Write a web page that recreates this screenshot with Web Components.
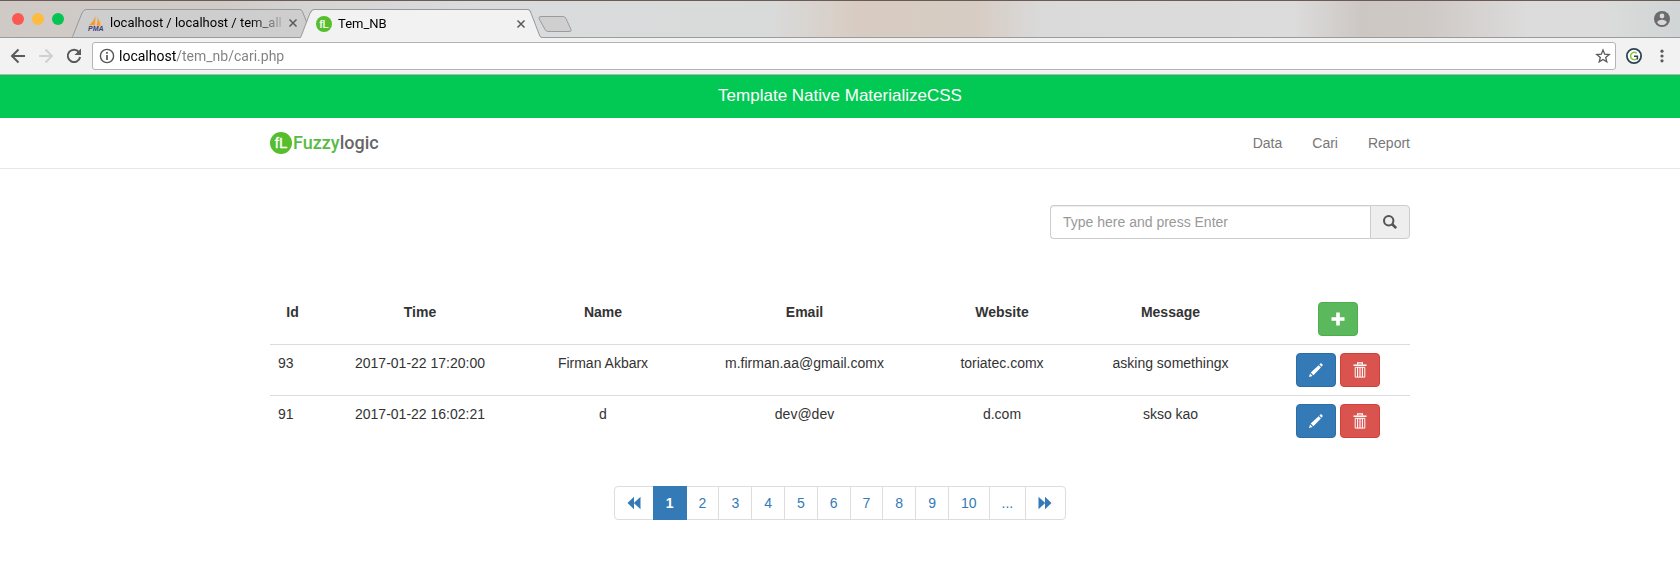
<!DOCTYPE html>
<html lang="en">
<head>
<meta charset="utf-8">
<title>Tem_NB</title>
<style>
  body { margin: 0; background: #fff; color: #333; font: 14px/20px "Liberation Sans", Arial, sans-serif; }
</style>
</head>
<body>
<browser-window>
  <tab-strip slot="tabs">
    <browser-tab><ui-icon slot="icon" name="pma"></ui-icon>localhost / localhost / tem_all /</browser-tab>
    <browser-tab active><ui-icon slot="icon" name="fl"></ui-icon>Tem_NB</browser-tab>
  </tab-strip>
  <browser-toolbar slot="toolbar" url="localhost/tem_nb/cari.php"></browser-toolbar>
  <page-banner>Template Native MaterializeCSS</page-banner>
  <site-nav>
    <nav-link href="#data">Data</nav-link>
    <nav-link href="#cari">Cari</nav-link>
    <nav-link href="#report">Report</nav-link>
  </site-nav>
  <page-container>
    <search-box></search-box>
    <message-table></message-table>
    <page-pagination></page-pagination>
  </page-container>
</browser-window>

<script>
const ICONS = {
  pma: ['0 0 16 16', `<path d="M7.500 1C6 5 4 8 1 10l6 .5zM9 0c1 3 1 7-.500 10.500l5.500.5C13 8 10.500 6 9 0z" fill="#f79a2e"/><path d="M11.500 3c0 3 .5 5 3.500 8h-3z" fill="#fbbf6e"/><text x="0" y="16" font-family="Liberation Sans" font-weight="bold" font-style="italic" font-size="7" fill="#3b3f7c">PMA</text>`],
  fl: ['0 0 22 22', `<circle cx="11" cy="11" r="11" fill="#56bd2d"/><text x="11" y="16" text-anchor="middle" font-family="Liberation Sans" font-size="15" fill="#fff" stroke="#fff" stroke-width=".3">fL</text>`],
  close: ['0 0 10 10', `<path d="M1.500 1.500l7 7m0-7l-7 7" stroke="#5a5a5a" stroke-width="1.500" fill="none"/>`],
  user: ['0 0 16 16', `<circle cx="8" cy="8" r="8" fill="#6b6b6b"/><circle cx="8" cy="5" r="2.400" fill="#d8d8d8"/><path d="M3.200 11.400C3.400 9.600 6.500 8.800 8 8.800s4.600.8 4.800 2.600C11.700 13 10 14 8 14s-3.700-1-4.800-2.600z" fill="#d8d8d8"/>`],
  back: ['0 0 16 16', `<path d="M15 8H2.500M8.500 1.500L2 8l6.500 6.500" fill="none" stroke="currentColor" stroke-width="2"/>`],
  forward: ['0 0 16 16', `<path d="M1 8h12.500M7.500 1.500L14 8l-6.500 6.500" fill="none" stroke="currentColor" stroke-width="2"/>`],
  reload: ['0 0 16 16', `<path d="M13 4.200A6.200 6.200 0 1 0 14.100 9" fill="none" stroke="currentColor" stroke-width="2"/><path d="M15 .5V7H8.500z" fill="currentColor"/>`],
  info: ['0 0 16 16', `<circle cx="8" cy="8" r="6.600" fill="none" stroke="#555" stroke-width="1.400"/><path d="M8 7v5M8 4v1.700" stroke="#555" stroke-width="1.700"/>`],
  star: ['0 0 16 16', `<path d="M8 2l1.700 4.200 4.500.3-3.500 2.900 1.100 4.400L8 11.400l-3.800 2.400 1.100-4.400-3.500-2.900 4.500-.3z" fill="none" stroke="#5a5a5a" stroke-width="1.300"/>`],
  g: ['0 0 16 16', `<circle cx="8" cy="8" r="7.100" fill="#fff" stroke="#2c4355" stroke-width="1.800"/><path d="M10.800 5.300A3.700 3.700 0 1 0 11 10.500" fill="none" stroke="#8cc63f" stroke-width="1.500"/><path d="M8 8.300h3.400v3.200" fill="none" stroke="#2c4355" stroke-width="1.500"/>`],
  menu: ['0 0 16 16', `<g fill="#5a5a5a"><circle cx="8" cy="3.200" r="1.600"/><circle cx="8" cy="8" r="1.600"/><circle cx="8" cy="12.800" r="1.600"/></g>`],
  search: ['0 0 14 14', `<circle cx="5.700" cy="5.700" r="4.700" fill="none" stroke="currentColor" stroke-width="2"/><path d="M9 9l4.200 4.200" stroke="currentColor" stroke-width="2.600"/>`],
  plus: ['0 0 14 14', `<path d="M7 .5v13M.5 7h13" stroke="currentColor" stroke-width="3.600"/>`],
  pencil: ['0 0 14 14', `<path d="M0 14l1-3.600 2.600 2.600zM1.700 9.600L9.700 2.200l2.200 2.200L4.400 12.300zM10.400 1.500L11.400.5q.6-.5 1.200 0l.9.9q.5.6 0 1.200l-.9 1.100z" fill="currentColor"/>`],
  trash: ['0 0 14 14', `<path d="M4.600 1.500V-.2h4.800v1.700" fill="none" stroke="currentColor" stroke-width="1.200"/><path d="M.5 2.200h13" stroke="currentColor" stroke-width="1.500"/><path d="M2.200 4.300h9.600v9.800H2.200z" fill="none" stroke="currentColor"/><path d="M4.600 4v10M7 4v10M9.400 4v10" stroke="currentColor" stroke-width="1.100"/>`],
  first: ['0 0 14 14', `<path d="M.5 7L7 .8v12.400zM6.800 7l6.700-6.200v12.400z" fill="currentColor"/>`],
  last: ['0 0 14 14', `<path d="M13.500 7L7 .8v12.400zM7.200 7L.5.8v12.400z" fill="currentColor"/>`]
};

function define(name, css, html, setup) {
  const template = document.createElement('template');
  template.innerHTML = `<style>*, :host { box-sizing: border-box; } ${css}</style>${html}`;
  customElements.define(name, class extends HTMLElement {
    constructor() {
      super();
      this.attachShadow({ mode: 'open' }).append(template.content.cloneNode(true));
    }
    connectedCallback() { if (setup) setup(this, this.shadowRoot); }
  });
}

define('ui-icon', `
  :host { display: inline-block; flex: none; width: var(--size, 16px); height: var(--size, 16px); }
  svg { display: block; width: 100%; height: 100%; overflow: visible; }
`, `<svg aria-hidden="true"></svg>`, (el, root) => {
  const [box, shapes] = ICONS[el.getAttribute('name')];
  const svg = root.querySelector('svg');
  svg.setAttribute('viewBox', box);
  svg.innerHTML = shapes;
});

define('browser-window', `:host { display: block; }`,
  `<header><slot name="tabs"></slot><slot name="toolbar"></slot></header><main><slot></slot></main>`);

define('tab-strip', `
  :host {
    display: flex; align-items: flex-end; height: 38px; padding: 0 10px 0 12px;
    border-top: 1px solid #6a5c55; border-bottom: 1px solid #9b9b9b;
    background: linear-gradient(90deg, #cfcac6 0, #d0cbc7 13%, #d5d5d6 19%, #dadbdc 28%, #d9dada 46%, #d8ccc2 51%, #d7ccc3 58%, #dadada 62%, #dcdcdc 77%, #cdc7c4 81%, #cfc9c6 85%, #dcdcdc 91%, #dcdcdc 95%, #d1d5d5 100%);
  }
  .lights { display: flex; gap: 8px; align-self: center; width: 60px; }
  .lights button { width: 12px; height: 12px; padding: 0; border: 0; border-radius: 50%; }
  .red { background: #fc5753; } .amber { background: #fdbc40; } .green { background: #04c552; }
  .new { width: 34px; height: 17px; margin: 0 auto 4px -4px; padding: 0; border: 0; background: none; }
  .new svg { display: block; }
  .user { align-self: center; padding: 0; border: 0; background: none; display: flex; }
`, `
  <div class="lights"><button class="red" aria-label="Close window"></button><button class="amber" aria-label="Minimise"></button><button class="green" aria-label="Zoom"></button></div>
  <slot></slot>
  <button class="new" aria-label="New tab"><svg width="34" height="17" viewBox="0 0 34 17"><path d="M3 .5h22q2 0 3 2l5 11q1 2-2 2H10q-2 0-3-2L1 2.500Q.5.5 3 .5z" fill="#cfcfcf" stroke="#9c9c9c"/></svg></button>
  <button class="user" aria-label="Profile"><ui-icon name="user"></ui-icon></button>
`);

define('browser-tab', `
  :host { display: flex; align-items: center; position: relative; isolation: isolate; width: 242px; height: 28px; margin-right: -14px; padding: 0 16px; color: #000; font: 13px/16px Roboto, sans-serif; --fill: #cecece; }
  :host([active]) { z-index: 1; margin-bottom: -1px; height: 29px; margin-right: 0; --fill: #f2f2f2; }
  svg { position: absolute; inset: 0; z-index: -1; width: 100%; height: 100%; }
  span { flex: 1; margin: 0 4px 0 6px; white-space: nowrap; overflow: hidden; mask-image: linear-gradient(90deg, #000 80%, transparent 102%); }
  button { display: flex; padding: 0; border: 0; background: none; }
  button ui-icon { --size: 10px; }
`, `
  <svg viewBox="0 0 242 28" preserveAspectRatio="none"><path d="M0 28Q1 27 2 24L10 4Q12 .5 14 .5H228Q230 .5 231 4L239 24Q240 27 242 28z" fill="var(--fill)"/><path d="M0 28Q1 27 2 24L10 4Q12 .5 14 .5H228Q230 .5 231 4L239 24Q240 27 242 28" fill="none" stroke="#999"/></svg>
  <slot name="icon"></slot><span><slot></slot></span><button aria-label="Close tab"><ui-icon name="close"></ui-icon></button>
`);

define('browser-toolbar', `
  :host { display: flex; align-items: center; gap: 12px; height: 37px; padding: 0 10px; background: #f2f2f2; border-bottom: 1px solid #b3b3b3; color: #5a5a5a; }
  button { display: flex; padding: 0; border: 0; background: none; color: inherit; }
  button:disabled { color: #d0d0d0; }
  .field { flex: 1; display: flex; align-items: center; gap: 4px; height: 28px; margin: 0 -2px; padding: 0 4px 0 6px; border: 1px solid #b4b4b4; border-radius: 3px; background: #fff; }
  input { flex: 1; min-width: 0; padding: 0; border: 0; outline: 0; font: 14px/20px Roboto, sans-serif; color: #808080; background: linear-gradient(90deg, #000 57px, #808080 57px); background-clip: text; -webkit-text-fill-color: transparent; }
`, `
  <button aria-label="Back"><ui-icon name="back"></ui-icon></button>
  <button aria-label="Forward" disabled><ui-icon name="forward"></ui-icon></button>
  <button aria-label="Reload"><ui-icon name="reload"></ui-icon></button>
  <div class="field">
    <button aria-label="Site information"><ui-icon name="info"></ui-icon></button>
    <input type="text" aria-label="Address">
    <button aria-label="Bookmark this page"><ui-icon name="star"></ui-icon></button>
  </div>
  <button aria-label="Extension"><ui-icon name="g"></ui-icon></button>
  <button aria-label="Menu"><ui-icon name="menu"></ui-icon></button>
`, (el, root) => { root.querySelector('input').value = el.getAttribute('url'); });

define('page-banner', `
  :host { display: block; padding: 11px 16px 12px; background: #02c953; color: #fff; text-align: center; }
  h1 { margin: 0; font-size: 17px; line-height: 20px; font-weight: 400; }
`, `<h1><slot></slot></h1>`);

define('site-nav', `
  :host { display: block; border-bottom: 1px solid #e7e7e7; }
  nav { display: flex; align-items: center; justify-content: space-between; max-width: 1140px; height: 50px; margin: 0 auto; }
  .brand { display: flex; align-items: center; gap: 1px; color: #666; text-decoration: none; font: 500 18px/20px Roboto, sans-serif; }
  .brand ui-icon { --size: 22px; }
  .brand b { color: #58bb45; font-weight: 500; }
  .links { display: flex; gap: 30px; }
`, `<nav><a class="brand" href="#home"><ui-icon name="fl"></ui-icon><span><b>Fuzzy</b>logic</span></a><div class="links"><slot></slot></div></nav>`);

define('nav-link', `:host { display: block; } a { color: #777; text-decoration: none; }`,
  `<a><slot></slot></a>`, (el, root) => { root.querySelector('a').href = el.getAttribute('href'); });

define('page-container', `:host { display: block; max-width: 1140px; margin: 0 auto; padding: 36px 0 20px; }`, `<slot></slot>`);

define('search-box', `
  :host { display: flex; justify-content: flex-end; }
  form { display: flex; width: 360px; height: 34px; }
  input { flex: 1; min-width: 0; padding: 6px 12px; border: 1px solid #ccc; border-right: 0; border-radius: 4px 0 0 4px; box-shadow: inset 0 1px 1px rgba(0,0,0,.075); font: inherit; color: #555; background: #fff; }
  input::placeholder { color: #999; opacity: 1; }
  button { display: flex; align-items: center; justify-content: center; width: 40px; padding: 0; border: 1px solid #ccc; border-radius: 0 4px 4px 0; background: #eee; color: #555; }
  ui-icon { --size: 14px; }
`, `<form><input type="text" aria-label="Search" placeholder="Type here and press Enter"><button type="button" aria-label="Search"><ui-icon name="search"></ui-icon></button></form>`);

define('action-button', `
  :host { display: inline-block; vertical-align: middle; }
  button { display: flex; align-items: center; justify-content: center; width: 40px; height: 34px; padding: 0; border: 1px solid #4cae4c; border-radius: 4px; background: #5cb85c; color: #fff; }
  :host([kind=edit]) button { background: #337ab7; border-color: #2e6da4; }
  :host([kind=delete]) button { background: #d9534f; border-color: #d43f3a; }
  slot { --size: 14px; }
`, `<button><slot></slot></button>`, (el, root) => { root.querySelector('button').setAttribute('aria-label', el.getAttribute('label')); });

const row = cells => `<tr>${cells.map(c => `<td>${c}</td>`).join('')}<td><div class="actions"><action-button kind="edit" label="Edit"><ui-icon name="pencil"></ui-icon></action-button><action-button kind="delete" label="Delete"><ui-icon name="trash"></ui-icon></action-button></div></td></tr>`;

define('message-table', `
  :host { display: block; margin-top: 55px; }
  table { width: 100%; table-layout: fixed; border-collapse: collapse; }
  th, td { padding: 8px; vertical-align: top; text-align: center; }
  td { border-top: 1px solid #ddd; }
  td:first-child { text-align: left; }
  .actions { display: flex; justify-content: center; gap: 4px; }
  .id { width: 45px; } .time { width: 210px; } .name { width: 156px; } .email { width: 247px; }
  .site { width: 148px; } .message { width: 189px; } .act { width: 145px; }
`, `<table>
  <thead><tr><th class="id" scope="col">Id</th><th class="time" scope="col">Time</th><th class="name" scope="col">Name</th><th class="email" scope="col">Email</th><th class="site" scope="col">Website</th><th class="message" scope="col">Message</th>
  <th class="act" scope="col"><div class="actions"><action-button kind="add" label="Add"><ui-icon name="plus"></ui-icon></action-button></div></th></tr></thead>
  <tbody>${row(['93', '2017-01-22 17:20:00', 'Firman Akbarx', 'm.firman.aa@gmail.comx', 'toriatec.comx', 'asking somethingx'])}${row(['91', '2017-01-22 16:02:21', 'd', 'dev@dev', 'd.com', 'skso kao'])}</tbody>
</table>`);

define('page-pagination', `
  :host { display: block; margin-top: 40px; }
  ul { display: flex; justify-content: center; margin: 0; padding: 0; list-style: none; }
  li + li { margin-left: -1px; }
  a { display: flex; align-items: center; height: 34px; padding: 0 12px; border: 1px solid #ddd; background: #fff; color: #337ab7; text-decoration: none; }
  li:first-child a { border-radius: 4px 0 0 4px; }
  li:last-child a { padding-right: 13px; border-radius: 0 4px 4px 0; }
  a[aria-current] { position: relative; background: #337ab7; border-color: #337ab7; color: #fff; font-weight: 700; }
  ui-icon { --size: 14px; }
`, `<nav aria-label="Pages"><ul>
  <li><a href="#first" aria-label="First"><ui-icon name="first"></ui-icon></a></li>
  <li><a href="#1" aria-current="page">1</a></li>${[2, 3, 4, 5, 6, 7, 8, 9, 10, '...'].map(n => `<li><a href="#${n}">${n}</a></li>`).join('')}
  <li><a href="#last" aria-label="Last"><ui-icon name="last"></ui-icon></a></li>
</ul></nav>`);
</script>
</body>
</html>
